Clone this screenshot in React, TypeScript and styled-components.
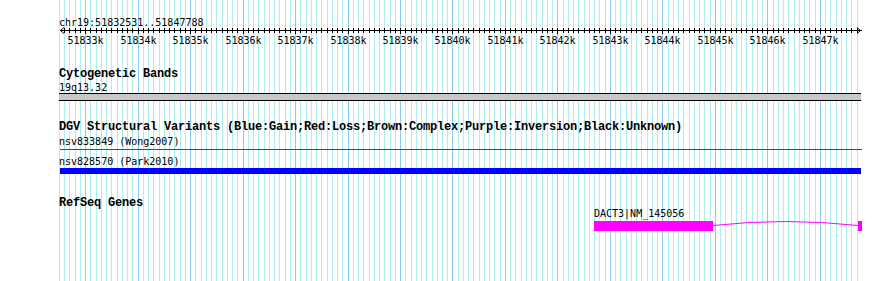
import React from "react";
import styled, { createGlobalStyle } from "styled-components";

const GlobalStyle = createGlobalStyle`
  html, body { margin: 0; padding: 0; background: #ffffff; }
  #root { width: 890px; height: 281px; }
`;

const X0 = 85.2;
const PX = 0.05247;
const LEFT = 59;
const xOf = (bp: number) => Math.round(X0 + (bp - 51833000) * PX);

const gridPositions: { x: number; major: boolean; bp: number }[] = [];
for (let bp = 51832500; bp <= 51847700; bp += 100) {
  gridPositions.push({ x: xOf(bp), major: bp % 1000 === 0, bp });
}

const MONO = `"Liberation Mono", "DejaVu Sans Mono", monospace`;
const SMALL = `"DejaVu Sans Mono", "Liberation Mono", monospace`;

const Canvas = styled.div`
  position: relative;
  width: 890px;
  height: 281px;
  background: #ffffff;
  overflow: hidden;
`;

const GridLayer = styled.svg`
  position: absolute;
  top: 0;
  left: 0;
  z-index: 0;
`;

const Tracks = styled.div`
  position: relative;
  z-index: 1;
  display: flex;
  flex-direction: column;
  padding-left: ${LEFT}px;
  width: ${890 - LEFT}px;
  height: 281px;
`;

const TextLine = styled.div<{ $mt?: number; $indent?: number }>`
  font-family: ${SMALL};
  font-size: 10px;
  line-height: 11px;
  height: 11px;
  color: #000000;
  white-space: nowrap;
  margin-top: ${(p) => p.$mt ?? 0}px;
  padding-left: ${(p) => p.$indent ?? 0}px;
`;

const TrackTitle = styled.div<{ $mt?: number }>`
  font-family: ${MONO};
  font-size: 12px;
  font-weight: bold;
  line-height: 13px;
  height: 13px;
  letter-spacing: -0.2px;
  color: #000000;
  white-space: nowrap;
  margin-top: ${(p) => p.$mt ?? 0}px;
`;

const RulerAxis = styled.svg`
  display: block;
  margin-top: -2px;
  overflow: visible;
`;

const BandBar = styled.div`
  box-sizing: border-box;
  width: 802px;
  height: 8px;
  background: #c8c8c8;
  border-top: 1px solid #000000;
  border-bottom: 1px solid #000000;
`;

const FeatureBar = styled.div<{ $mt: number; $color: string; $h: number; $x: number; $w: number }>`
  width: ${(p) => p.$w}px;
  height: ${(p) => p.$h}px;
  margin-top: ${(p) => p.$mt}px;
  margin-left: ${(p) => p.$x - LEFT}px;
  background: ${(p) => p.$color};
`;

const GeneGlyph = styled.svg`
  display: block;
  margin-top: 2px;
  overflow: visible;
`;

const Grid: React.FC = () => (
  <GridLayer width={890} height={281} viewBox="0 0 890 281">
    {gridPositions.map((g) => (
      <line
        key={g.bp}
        x1={g.x + 0.5}
        x2={g.x + 0.5}
        y1={0}
        y2={281}
        stroke={g.major ? "#8ccaf2" : "#aeeeee"}
        strokeWidth={1}
        shapeRendering="crispEdges"
      />
    ))}
  </GridLayer>
);

const Ruler: React.FC = () => {
  const top = 26;
  const ay = 30 - top + 0.5;
  const lx = (x: number) => x - LEFT;
  const ticks = gridPositions.filter((g) => g.bp > 51832531 && g.bp < 51847788);
  return (
    <RulerAxis width={890 - LEFT} height={20} viewBox={`0 0 ${890 - LEFT} 20`}>
      <g stroke="#000000" strokeWidth={1} shapeRendering="crispEdges" fill="none">
        <line x1={lx(60)} x2={lx(862)} y1={ay} y2={ay} />
        {ticks.map((t) => (
          <line
            key={t.bp}
            x1={lx(t.x) + 0.5}
            x2={lx(t.x) + 0.5}
            y1={28 - top}
            y2={(t.major ? 34 : 33) - top}
          />
        ))}
      </g>
      <g stroke="#000000" strokeWidth={1} fill="none">
        <polyline points={`${lx(64)},${ay - 3} ${lx(60.5)},${ay} ${lx(64)},${ay + 3}`} />
        <polyline points={`${lx(857)},${ay - 3} ${lx(860.5)},${ay} ${lx(857)},${ay + 3}`} />
      </g>
      <g fontFamily={SMALL} fontSize={10} fill="#000000" textAnchor="middle">
        {ticks
          .filter((t) => t.major)
          .map((t) => (
            <text key={t.bp} x={lx(t.x) + 0.5} y={17.5}>
              {`${t.bp / 1000}k`}
            </text>
          ))}
      </g>
    </RulerAxis>
  );
};

const Gene: React.FC = () => {
  const lx = (x: number) => x - LEFT;
  return (
    <GeneGlyph width={890 - LEFT} height={10} viewBox={`0 0 ${890 - LEFT} 10`}>
      <rect x={lx(594)} y={0} width={119} height={10} fill="#ff00ff" />
      <path
        d={`M ${lx(713)} 4.5 Q ${lx(785.5)} -3.5 ${lx(858)} 4.5`}
        stroke="#ff00ff"
        strokeWidth={1}
        fill="none"
      />
      <rect x={lx(858)} y={0} width={4} height={10} fill="#ff00ff" />
    </GeneGlyph>
  );
};

export default function App() {
  return (
    <>
      <GlobalStyle />
      <Canvas>
        <Grid />
        <Tracks>
          <TextLine $mt={17}>chr19:51832531..51847788</TextLine>
          <Ruler />

          <TrackTitle $mt={22}>Cytogenetic Bands</TrackTitle>
          <TextLine $mt={1}>19q13.32</TextLine>
          <BandBar />

          <TrackTitle $mt={20}>
            DGV Structural Variants (Blue:Gain;Red:Loss;Brown:Complex;Purple:Inversion;Black:Unknown)
          </TrackTitle>
          <TextLine $mt={2}>nsv833849 (Wong2007)</TextLine>
          <FeatureBar $mt={2} $color="#ff0000" $h={1} $x={60} $w={802} />
          <TextLine $mt={6}>nsv828570 (Park2010)</TextLine>
          <FeatureBar $mt={1} $color="#0000ff" $h={6} $x={60} $w={801} />

          <TrackTitle $mt={23}>RefSeq Genes</TrackTitle>
          <TextLine $mt={-2} $indent={594 - LEFT}>
            DACT3|NM_145056
          </TextLine>
          <Gene />
        </Tracks>
      </Canvas>
    </>
  );
}
